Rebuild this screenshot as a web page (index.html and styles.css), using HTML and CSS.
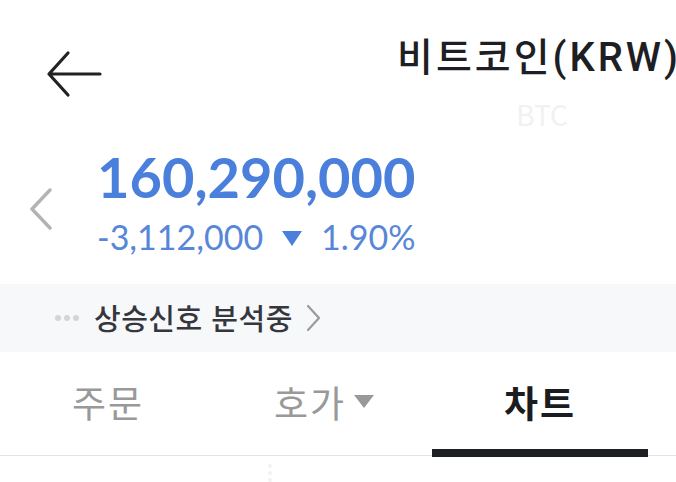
FILE: index.html
```html
<!DOCTYPE html>
<html lang="ko">
<head>
    <meta charset="UTF-8">
    <meta name="viewport" content="width=device-width, initial-scale=1.0">
    <title>비트코인(KRW)</title>
    <link rel="stylesheet" href="styles.css">
</head>
<body>
    <header class="header">
        <svg class="back" viewBox="0 0 56 48" width="56" height="48">
            <path d="M22 3 L3 24 L22 45 M3 24 L54 24" fill="none" stroke="#222" stroke-width="3.2" stroke-linecap="round" stroke-linejoin="round"/>
        </svg>
        <div class="title-block">
            <div class="title">비트코인<span class="unit">(KRW)</span></div>
            <div class="symbol">BTC</div>
        </div>
    </header>

    <section class="quote">
        <svg class="prev" viewBox="0 0 24 42" width="24" height="42">
            <path d="M21 2 L3 21 L21 40" fill="none" stroke="#b3b3b3" stroke-width="3.4" stroke-linecap="round" stroke-linejoin="round"/>
        </svg>
        <div class="price-block">
            <div class="price">160,290,000</div>
            <div class="change">-3,112,000<span class="arrow"></span>1.90%</div>
        </div>
    </section>

    <div class="signal">
        <span class="dots"><i></i><i></i><i></i></span>
        <span class="signal-text">상승신호 분석중</span>
        <svg class="more" viewBox="0 0 15 28" width="15" height="28">
            <path d="M2 2 L13 14 L2 26" fill="none" stroke="#9a9a9a" stroke-width="2.2" stroke-linecap="round" stroke-linejoin="round"/>
        </svg>
    </div>

    <nav class="tabs">
        <div class="tab">주문</div>
        <div class="tab">호가<span class="caret"></span></div>
        <div class="tab active">차트</div>
    </nav>

    <div class="handle"><i></i><i></i><i></i></div>
</body>
</html>
```

FILE: styles.css
```css
body {
    margin: 0;
    width: 676px;
    height: 482px;
    overflow: hidden;
    background: #fff;
    font-family: "Noto Sans CJK KR", "Noto Sans", sans-serif;
    color: #222;
}
.header {
    display: flex;
    align-items: flex-start;
    height: 134px;
    padding-left: 46px;
    box-sizing: border-box;
}
.back {
    margin-top: 50px;
    flex-shrink: 0;
}
.title-block {
    margin-left: 295px;
    display: flex;
    flex-direction: column;
    align-items: center;
    white-space: nowrap;
}
.title {
    font-size: 39px;
    font-weight: 500;
    line-height: 1;
    letter-spacing: 3px;
    margin-top: 35px;
    color: #1e1f24;
}
.unit {
    font-family: Roboto, "Noto Sans", sans-serif;
    font-weight: 500;
    font-size: 40px;
    letter-spacing: 3px;
}
.symbol {
    font-size: 28px;
    line-height: 1;
    margin: 22px 0 0 6px;
    color: #f1f1f1;
}
.quote {
    display: flex;
    align-items: flex-start;
    padding: 15px 0 0 29px;
    height: 150px;
    box-sizing: border-box;
}
.prev {
    flex-shrink: 0;
    margin-top: 39px;
}
.price-block {
    margin-left: 44px;
    font-family: Lato, "Noto Sans", sans-serif;
    color: #4a7fdc;
}
.price {
    font-size: 56px;
    font-weight: 700;
    line-height: 1;
}
.change {
    display: flex;
    align-items: center;
    font-size: 34px;
    font-weight: 400;
    line-height: 1;
    margin-top: 15px;
    color: #5886d8;
}
.arrow {
    width: 0;
    height: 0;
    border-left: 10px solid transparent;
    border-right: 10px solid transparent;
    border-top: 15px solid #4a7fdc;
    margin: 2px 19px 0 19px;
}
.signal {
    display: flex;
    align-items: center;
    height: 68px;
    background: #f7f8fa;
    padding-left: 55px;
}
.dots {
    display: flex;
    gap: 3px;
    margin-right: 15px;
}
.dots i, .handle i {
    display: block;
    width: 6px;
    height: 6px;
    border-radius: 50%;
    background: #d4d5d8;
}
.signal-text {
    font-size: 29px;
    font-weight: 500;
    letter-spacing: 0.5px;
    color: #35373d;
    margin-top: -2px;
}
.more {
    margin-left: 13px;
}
.tabs {
    display: grid;
    grid-template-columns: repeat(3, 216px);
    height: 104px;
    border-bottom: 1px solid #e3e3e3;
    box-sizing: border-box;
}
.tab {
    position: relative;
    display: flex;
    align-items: center;
    justify-content: center;
    font-size: 37px;
    letter-spacing: 2px;
    color: #999;
    padding-bottom: 4px;
}
.tab.active {
    color: #1b1c20;
    font-weight: 700;
}
.tab.active::after {
    content: "";
    position: absolute;
    left: 0;
    right: 0;
    bottom: -2px;
    height: 8px;
    background: #1f2024;
}
.caret {
    width: 0;
    height: 0;
    border-left: 10px solid transparent;
    border-right: 10px solid transparent;
    border-top: 13px solid #999;
    margin-left: 8px;
}
.handle {
    display: flex;
    flex-direction: column;
    gap: 3px;
    width: 4px;
    margin: 8px 0 0 268px;
}
.handle i {
    width: 4px;
    height: 4px;
    background: #f2f2f2;
}
```
